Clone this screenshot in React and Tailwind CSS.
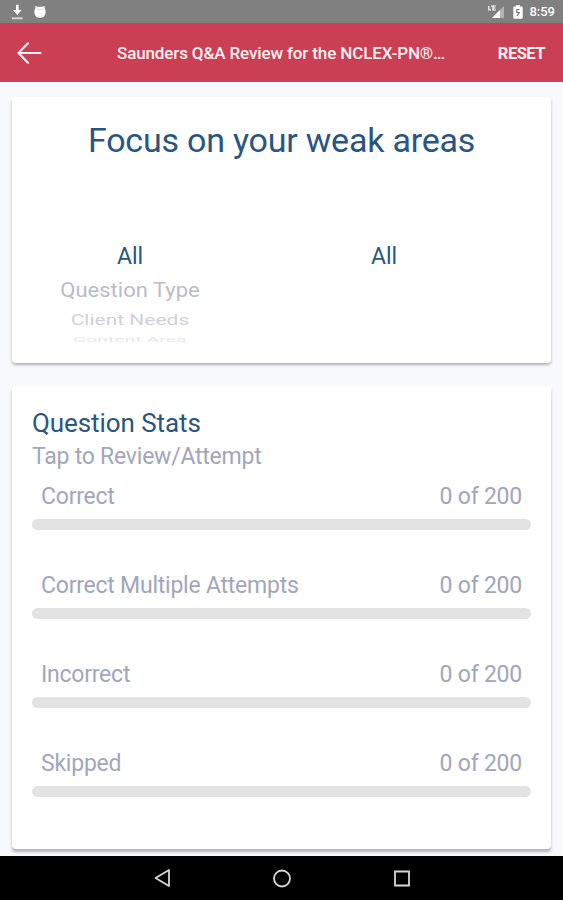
const stats = [
    { label: 'Correct', count: 0 },
    { label: 'Correct Multiple Attempts', count: 0 },
    { label: 'Incorrect', count: 0 },
    { label: 'Skipped', count: 0 }
];

const TOTAL = 200;

const StatusBar = () => (
    <div className="h-[23px] shrink-0 bg-[#808080] flex items-center justify-between pl-[11px] pr-[8px] text-white">
        <div className="flex items-center gap-[11px]">
            <svg width="12" height="16" viewBox="0 0 12 16" fill="currentColor">
                <path d="M5 .8h2.600v5.200h3L6.300 11 2 6H5z" />
                <path d="M.8 13.300h10.800v2H.8z" opacity=".65" />
            </svg>
            <svg width="12" height="14" viewBox="0 0 12 14" fill="currentColor">
                <path d="M1.800.8 3.400 1.800h5.200L10.200.8l.6 2.400c.6 1 .8 2.200.8 3.600 0 3.700-2.200 6.200-5.600 6.200S.4 10.500.4 6.800c0-1.400.2-2.600.8-3.600z" />
                <path d="M1.500 4.300h9" stroke="#d8d8d8" strokeWidth=".8" />
            </svg>
        </div>
        <div className="flex items-center">
            <svg width="17" height="14" viewBox="0 0 17 14" fill="currentColor">
                <path d="M16 1v12H4z" opacity=".4" />
                <path d="M12 5v8H4z" />
                <path d="M.8 1v4h2.400M7.800 1H5v4h2.800M5 3h2.400M3 1h1.600" fill="none" stroke="currentColor" strokeWidth="1.200" />
            </svg>
            <svg className="ml-[8px]" width="10" height="14" viewBox="0 0 10 14">
                <path d="M3 .3h4v1.300h1.500q1.200 0 1.200 1.200v9.700q0 1.200-1.200 1.200h-7Q.3 13.700.3 12.500V2.800q0-1.200 1.200-1.200H3z" fill="currentColor" />
                <path d="M6.600 4.500H3.800v3h2.500L4 11" fill="none" stroke="#777" strokeWidth="1.200" />
            </svg>
            <span className="ml-[6px] text-[13px] leading-none font-medium">8:59</span>
        </div>
    </div>
);

const Header = () => (
    <header className="h-[59px] shrink-0 bg-[#cb3f54] flex items-center pl-[17px] pr-[18px] text-[#fff1f1]">
        <svg width="25" height="24" viewBox="0 0 25 24" fill="none" stroke="currentColor" strokeWidth="2.100" strokeLinecap="round" strokeLinejoin="round">
            <path d="M11 2.300 1.500 12l9.500 9.700M1.500 12h22" />
        </svg>
        <h1 className="ml-[75px] mt-[2px] w-[330px] whitespace-nowrap text-[17px] font-medium tracking-[-0.130px]">
            Saunders Q&amp;A Review for the NCLEX-PN®…
        </h1>
        <button className="ml-auto mt-[3px] text-[16.500px] font-bold tracking-[-0.500px]">RESET</button>
    </header>
);

const FocusCard = () => (
    <section className="h-[266px] shrink-0 overflow-hidden rounded-[4px] bg-white shadow-[0_2px_3px_rgba(0,0,0,0.28)]">
        <h2 className="pt-[19px] text-center text-[34px] leading-[48px] tracking-[-0.220px] text-[#2a5580]">Focus on your weak areas</h2>
        <div className="mt-[78px] grid grid-cols-[236px_1fr] text-center">
            <div className="flex flex-col items-center">
                <p className="text-[23px] leading-[30px] text-[#2a5580]">All</p>
                <p className="mt-[2px] text-[22px] leading-[32px] text-[#b9bcc9] scale-y-95">Question Type</p>
                <p className="h-[28px] text-[21px] leading-[28px] text-[#cfd1d9] scale-y-[0.72]">Client Needs</p>
                <p className="-mt-[3px] h-[18px] text-[19.500px] leading-[18px] text-[#e6e7ec] scale-y-[0.4]">Content Area</p>
            </div>
            <p className="pl-[37px] text-left text-[23px] leading-[30px] text-[#2a5580]">
                <span className="ml-[86px]">All</span>
            </p>
        </div>
    </section>
);

const StatRow = ({ label, count }) => (
    <div className="h-[89.300px]">
        <div className="flex justify-between px-[9px] text-[23px] leading-[30px] tracking-[-0.230px]">
            <span>{label}</span>
            <span>{count} of {TOTAL}</span>
        </div>
        <div className="mt-[7px] h-[11px] rounded-full bg-[#e3e3e3] overflow-hidden">
            <div className="h-full bg-[#2a5580]" style={{ width: `${(count / TOTAL) * 100}%` }} />
        </div>
    </div>
);

const StatsCard = () => (
    <section className="mt-[23px] h-[463px] shrink-0 rounded-[4px] bg-white px-[20px] pt-[21px] text-[#a2a6ba] shadow-[0_3px_3px_rgba(0,0,0,0.28)]">
        <h2 className="text-[26px] leading-[32px] tracking-[-0.080px] text-[#2a5580]">Question Stats</h2>
        <p className="mt-px text-[23px] leading-[34px] tracking-[-0.230px]">Tap to Review/Attempt</p>
        <div className="mt-[7.500px]">
            {stats.map((stat) => (
                <StatRow key={stat.label} label={stat.label} count={stat.count} />
            ))}
        </div>
    </section>
);

const NavBar = () => (
    <nav className="h-[44px] shrink-0 bg-black flex items-center justify-center gap-[102px] text-[#d8d8d8]">
        <svg width="18" height="20" viewBox="0 0 18 20" fill="none" stroke="currentColor" strokeWidth="1.800" strokeLinejoin="round">
            <path d="M16 2v16L2.500 10z" />
        </svg>
        <svg width="19" height="19" viewBox="0 0 19 19" fill="none" stroke="currentColor" strokeWidth="1.800">
            <circle cx="9" cy="9.500" r="8" />
        </svg>
        <svg width="17" height="17" viewBox="0 0 17 17" fill="none" stroke="currentColor" strokeWidth="1.800">
            <path d="M1 1.500h14v14H1z" />
        </svg>
    </nav>
);

const App = () => {
    return (
        <div className="h-[900px] w-[563px] overflow-hidden flex flex-col bg-[#f7f9fc] font-[Roboto,sans-serif]">
            <StatusBar />
            <Header />
            <main className="flex-1 overflow-hidden flex flex-col px-[12px] pt-[15px]">
                <FocusCard />
                <StatsCard />
            </main>
            <NavBar />
        </div>
    );
};

export default App;
